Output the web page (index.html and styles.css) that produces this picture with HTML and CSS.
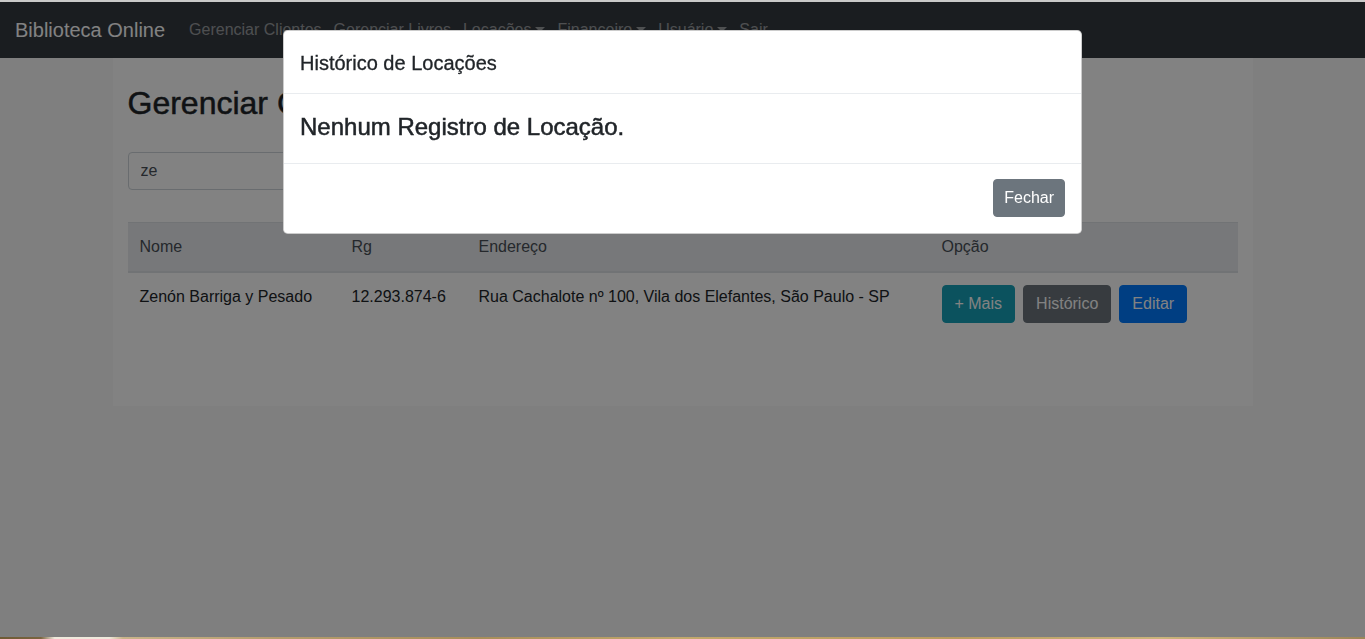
FILE: index.html
```html
<!DOCTYPE html>
<html lang="pt-BR">
<head>
<meta charset="utf-8">
<title>Biblioteca Online</title>
<link rel="stylesheet" href="styles.css">
</head>
<body>
<div class="frame-top"></div>
<nav class="navbar">
  <a class="brand" href="#">Biblioteca Online</a>
  <ul class="nav">
    <li><a href="#">Gerenciar Clientes</a></li>
    <li><a href="#">Gerenciar Livros</a></li>
    <li><a href="#" class="dropdown">Locações</a></li>
    <li><a href="#" class="dropdown">Financeiro</a></li>
    <li><a href="#" class="dropdown">Usuário</a></li>
    <li><a href="#">Sair</a></li>
  </ul>
</nav>
<main class="container">
  <h2 class="title">Gerenciar Clientes</h2>
  <form class="search">
    <input class="form-control" type="text" value="ze">
  </form>
  <table class="table">
    <thead>
      <tr>
        <th class="c-nome">Nome</th>
        <th class="c-rg">Rg</th>
        <th class="c-end">Endereço</th>
        <th class="c-op">Opção</th>
      </tr>
    </thead>
    <tbody>
      <tr>
        <td>Zenón Barriga y Pesado</td>
        <td>12.293.874-6</td>
        <td>Rua Cachalote nº 100, Vila dos Elefantes, São Paulo - SP</td>
        <td>
          <div class="actions">
            <button class="btn btn-info" type="button">+ Mais</button>
            <button class="btn btn-secondary" type="button">Histórico</button>
            <button class="btn btn-primary" type="button">Editar</button>
          </div>
        </td>
      </tr>
    </tbody>
  </table>
</main>
<div class="backdrop"></div>
<div class="modal">
  <div class="modal-content">
    <div class="modal-header">
      <h5 class="modal-title">Histórico de Locações</h5>
    </div>
    <div class="modal-body">
      <h4 class="empty">Nenhum Registro de Locação.</h4>
    </div>
    <div class="modal-footer">
      <button class="btn btn-secondary btn-close" type="button">Fechar</button>
    </div>
  </div>
</div>
<div class="frame-bottom"></div>
</body>
</html>
```

FILE: styles.css
```css
* { box-sizing: border-box; }

html, body {
  margin: 0;
  padding: 0;
}

body {
  font-family: "Liberation Sans", Arial, sans-serif;
  font-size: 16px;
  line-height: 1.5;
  color: #212529;
  background: #f9f9f9;
  min-height: 639px;
  padding-top: 2px;
}

.frame-top {
  position: fixed;
  top: 0;
  left: 0;
  right: 0;
  height: 2px;
  background: #c9c9c9;
  z-index: 3000;
}

.frame-bottom {
  position: fixed;
  left: 0;
  right: 0;
  bottom: 0;
  height: 2px;
  background: linear-gradient(90deg, #6e5a35 0%, #7a6540 3%, #efe9dc 4%, #efe9dc 8%, #c9b48a 9%, #b59d6e 20%, #a88e5a 35%, #c2a86c 50%, #b89c60 70%, #cbb47c 85%, #9c8658 100%);
  z-index: 3000;
}

/* Navbar */
.navbar {
  display: flex;
  align-items: center;
  height: 56px;
  padding: 8px 16px 8px 15px;
  background: #343a40;
}

.brand {
  font-size: 20px;
  line-height: 30px;
  color: #fff;
  text-decoration: none;
  margin-right: 18px;
  padding: 5px 0;
}

.nav {
  display: flex;
  list-style: none;
  margin: 0;
  padding: 0;
}

.nav a {
  display: block;
  padding: 8px 6px;
  color: rgba(255, 255, 255, .5);
  text-decoration: none;
  font-size: 16px;
  line-height: 24px;
}

.nav a.dropdown::after {
  content: "";
  display: inline-block;
  margin-left: 4px;
  vertical-align: 3px;
  border-top: 5px solid;
  border-right: 5px solid transparent;
  border-left: 5px solid transparent;
}

/* Page */
.container {
  width: 1140px;
  margin: 0 auto;
  padding: 26px 15px 55px;
  background: #fff;
}

.title {
  margin: 0 0 8px;
  font-size: 32px;
  font-weight: 400;
  line-height: 1.2;
  -webkit-text-stroke: 0.5px currentColor;
}

.search {
  margin: 30px 0 32px;
}

.form-control {
  display: block;
  width: 555px;
  height: 38px;
  padding: 6px 12px;
  font: inherit;
  color: #495057;
  background: #fff;
  border: 1px solid #ced4da;
  border-radius: 4px;
}

.table {
  width: 100%;
  border-collapse: collapse;
  margin-bottom: 16px;
}

.table th,
.table td {
  padding: 12px;
  text-align: left;
  vertical-align: top;
  border-top: 1px solid #dee2e6;
  font-weight: 400;
}

.table thead th {
  background: #e9ecef;
  color: #495057;
  border-bottom: 2px solid #dee2e6;
}

.c-nome { width: 212px; }
.c-rg { width: 127px; }
.c-end { width: 463px; }

.actions {
  display: flex;
  gap: 8px;
}

.btn {
  display: inline-block;
  height: 38px;
  padding: 6px 12px;
  font: inherit;
  font-size: 16px;
  line-height: 24px;
  color: #fff;
  border: 1px solid transparent;
  border-radius: 4px;
  cursor: pointer;
}

.btn-info { background: #17a2b8; border-color: #17a2b8; }
.btn-secondary { background: #6c757d; border-color: #6c757d; }
.btn-primary { background: #007bff; border-color: #007bff; }

.btn-close {
  padding: 6px 10px;
}

/* Modal */
.backdrop {
  position: fixed;
  inset: 0;
  background: rgba(0, 0, 0, .49);
  z-index: 1040;
}

.modal {
  position: fixed;
  inset: 0;
  z-index: 1050;
  padding-top: 30px;
}

.modal-content {
  width: 799px;
  margin: 0 auto;
  background: #fff;
  border: 1px solid rgba(0, 0, 0, .2);
  border-radius: 4.8px;
  display: flex;
  flex-direction: column;
}

.modal-header {
  padding: 17px 16px 15px;
  border-bottom: 1px solid #e9ecef;
}

.modal-title {
  margin: 0;
  font-size: 20px;
  font-weight: 400;
  line-height: 30px;
  -webkit-text-stroke: 0.3px currentColor;
}

.modal-body {
  padding: 19px 16px 13px;
}

.empty {
  margin: 0 0 8px;
  font-size: 24px;
  font-weight: 400;
  line-height: 1.2;
  -webkit-text-stroke: 0.5px currentColor;
}

.modal-footer {
  display: flex;
  justify-content: flex-end;
  padding: 15px 16px 16px;
  border-top: 1px solid #e9ecef;
}
```
